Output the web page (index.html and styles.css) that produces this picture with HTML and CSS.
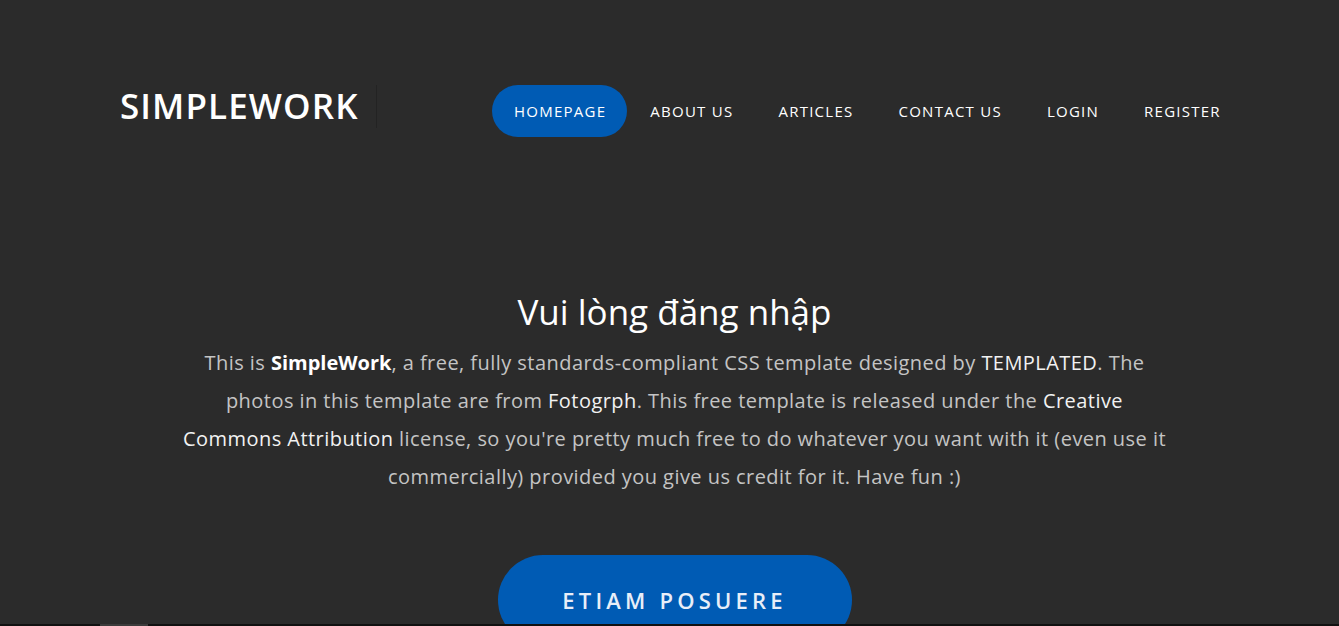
FILE: index.html
```html
<!DOCTYPE html>
<html lang="vi">
<head>
<meta charset="utf-8">
<title>SimpleWork</title>
<link rel="stylesheet" href="styles.css">
</head>
<body>
<header class="site-header">
  <div class="logo">SIMPLEWORK</div>
  <nav class="nav">
    <a class="nav-item active" href="#">HOMEPAGE</a>
    <a class="nav-item" href="#">ABOUT US</a>
    <a class="nav-item" href="#">ARTICLES</a>
    <a class="nav-item" href="#">CONTACT US</a>
    <a class="nav-item" href="#">LOGIN</a>
    <a class="nav-item" href="#">REGISTER</a>
  </nav>
</header>
<section class="hero">
  <h1 class="hero-title">Vui lòng đăng nhập</h1>
  <p class="hero-text">This is <strong>SimpleWork</strong>, a free, fully standards-compliant CSS template designed by <a href="#">TEMPLATED</a>. The photos in this template are from <a href="#">Fotogrph</a>. This free template is released under the <a href="#">Creative Commons Attribution</a> license, so you're pretty much free to do whatever you want with it (even use it commercially) provided you give us credit for it. Have fun :)</p>
  <a class="hero-button" href="#">ETIAM POSUERE</a>
</section>
<div class="scrollbar"><span class="scrollbar-thumb"></span></div>
</body>
</html>
```

FILE: styles.css
```css
html, body {
  margin: 0;
  padding: 0;
}
body {
  background: #2b2b2b;
  color: #c4c4c4;
  font-family: "Open Sans", "Noto Sans", sans-serif;
  overflow: hidden;
}
a {
  text-decoration: none;
  color: #ffffff;
}
.site-header {
  display: flex;
  align-items: center;
  padding: 85px 0 0 120px;
}
.logo {
  font-size: 35px;
  font-weight: 600;
  letter-spacing: 1.1px;
  color: #ffffff;
  height: 43px;
  line-height: 42px;
  margin-bottom: 9px;
  width: 256px;
  border-right: 1px solid #232323;
}
.nav {
  display: flex;
  margin-left: 115px;
}
.nav-item {
  display: block;
  height: 52px;
  line-height: 52px;
  padding: 0 22px;
  font-size: 15px;
  letter-spacing: 1.25px;
  color: #ffffff;
  border-radius: 26px;
}
.nav-item + .nav-item {
  margin-left: 1px;
}
.nav-item.active {
  background: #005bb4;
  padding: 0 21px 0 22px;
}
.hero {
  display: flex;
  flex-direction: column;
  align-items: center;
  padding: 152px 0 0 10px;
}
.hero-title {
  margin: 0;
  font-size: 35px;
  font-weight: 400;
  line-height: 46px;
  color: #ffffff;
}
.hero-text {
  margin: 9px 0 0;
  width: 990px;
  text-align: center;
  font-size: 20px;
  letter-spacing: 0.45px;
  line-height: 38px;
}
.hero-text strong {
  color: #ffffff;
  font-weight: 700;
  letter-spacing: 0;
}
.hero-text a {
  color: #f2f2f2;
}
.hero-button {
  margin-top: 59px;
  width: 354px;
  height: 90px;
  line-height: 90px;
  text-align: center;
  border-radius: 50px;
  background: #005bb4;
  color: #e8eef8;
  font-size: 22px;
  font-weight: 600;
  letter-spacing: 4.2px;
}
.scrollbar {
  position: fixed;
  left: 0;
  right: 0;
  bottom: 0;
  height: 2px;
  background: #111111;
}
.scrollbar-thumb {
  display: block;
  margin-left: 100px;
  width: 48px;
  height: 2px;
  background: #3b3b3b;
}
```
